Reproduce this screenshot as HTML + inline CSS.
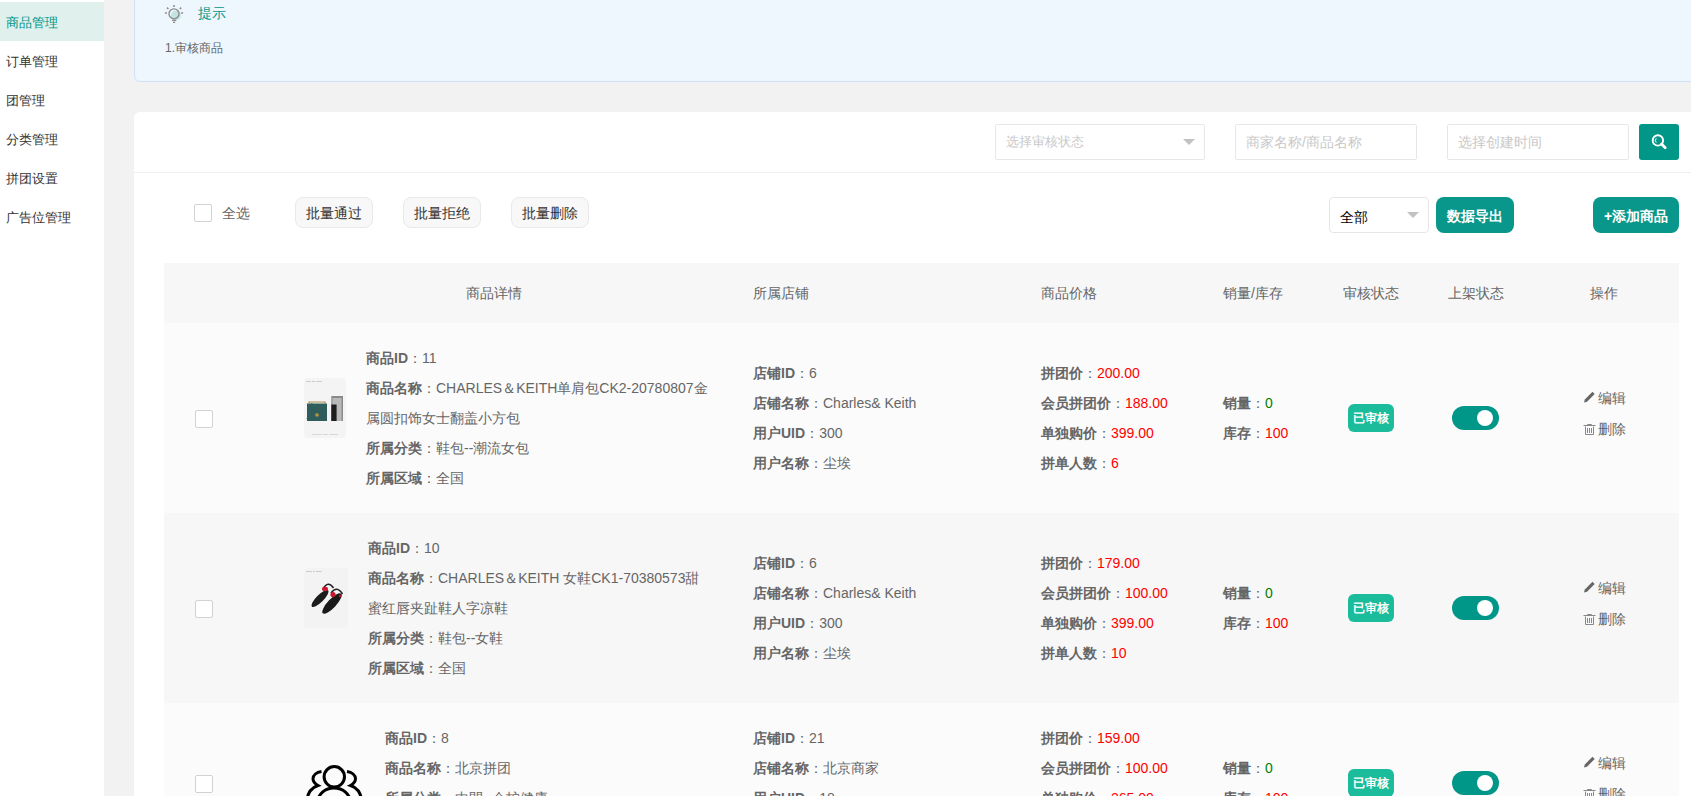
<!DOCTYPE html><html><head><meta charset="utf-8"><style>
*{margin:0;padding:0;box-sizing:border-box}
html,body{width:1691px;height:796px;overflow:hidden;background:#f2f2f2;font-family:"Liberation Sans",sans-serif;color:#666}
.abs{position:absolute}
.side{position:absolute;left:0;top:0;width:104px;height:796px;background:#fff}
.nav{position:absolute;left:0;width:104px;height:39px;line-height:39px;padding-top:1px;padding-left:6px;font-size:13px;color:#333;white-space:nowrap}
.nav.on{background:#dff0ed;color:#009688}
.tip{position:absolute;left:134px;top:-10px;width:1600px;height:92px;background:#eef6fe;border:1px solid #cfe2fa;border-radius:6px}
.card{position:absolute;left:134px;top:112px;width:1600px;height:800px;background:#fff;border-radius:6px}
.inp{position:absolute;top:124px;height:36px;border:1px solid #e6e6e6;border-radius:2px;background:#fff;font-size:13px;color:#c9c9c9;line-height:34px;padding-left:10px;white-space:nowrap}
.tri{position:absolute;width:0;height:0;border-left:6px solid transparent;border-right:6px solid transparent;border-top:6px solid #c2c2c2}
.btn{position:absolute;top:197px;height:31px;border:1px solid #e9e9e9;background:#f8f8f8;border-radius:8px;font-size:14px;color:#333;line-height:30px;text-align:center;white-space:nowrap}
.gbtn{position:absolute;top:197px;height:36px;background:#08978a;border-radius:8px;font-size:14px;color:#fff;line-height:38px;text-align:center;font-weight:bold;white-space:nowrap}
.chk{position:absolute;width:18px;height:18px;border:1px solid #d2d2d2;border-radius:2px;background:#fff}
.th{position:absolute;top:283px;line-height:20px;font-size:14px;color:#666;white-space:nowrap}
.row{position:absolute;left:164px;width:1515px}
.t{position:absolute;font-size:14px;line-height:30px;height:30px;color:#666;white-space:nowrap}
.t b{font-weight:bold;color:#666}
.r{color:#f00}
.g{color:#008000}
.badge{position:absolute;width:46px;height:28px;border-radius:6px;background:#1bbc9b;color:#fff;font-size:12px;font-weight:bold;line-height:28px;text-align:center;white-space:nowrap}
.sw{position:absolute;width:47px;height:24px;border-radius:12px;background:#009688}
.sw i{position:absolute;right:6px;top:4px;width:16px;height:16px;border-radius:50%;background:#fff}
.op{position:absolute;font-size:14px;line-height:20px;color:#666;white-space:nowrap}
</style></head><body>
<div class="side">
<div class="nav on" style="top:2px">商品管理</div>
<div class="nav" style="top:41px">订单管理</div>
<div class="nav" style="top:80px">团管理</div>
<div class="nav" style="top:119px">分类管理</div>
<div class="nav" style="top:158px">拼团设置</div>
<div class="nav" style="top:197px">广告位管理</div>
</div>
<div class="tip"></div>
<svg class="abs" style="left:160px;top:0px" width="30" height="30" viewBox="0 0 30 30">
<circle cx="16" cy="15.3" r="4.9" fill="#c4e3e3"/>
<circle cx="14" cy="13.8" r="5" fill="none" stroke="#8a8a8a" stroke-width="1.35"/>
<path d="M12 20.4h4.2M13 22.3h2.2" stroke="#8a8a8a" stroke-width="1.3"/>
<path d="M14 5.1v1.8M7 7.6l1.4 1.4M21.2 7.6l-1.4 1.4M4.9 13h2M21.1 13h2" stroke="#8a8a8a" stroke-width="1.5"/>
</svg>
<div class="abs" style="left:198px;top:3px;font-size:14px;line-height:20px;color:#009688">提示</div>
<div class="abs" style="left:165px;top:39px;font-size:12px;line-height:18px;color:#666">1.审核商品</div>
<div class="card"></div>
<div class="abs" style="left:134px;top:172px;width:1600px;height:1px;background:#f0f0f0"></div>
<div class="inp" style="left:995px;width:210px">选择审核状态</div>
<div class="tri" style="left:1183px;top:139px"></div>
<div class="inp" style="left:1235px;width:182px;font-size:14px">商家名称/商品名称</div>
<div class="inp" style="left:1447px;width:182px;font-size:14px">选择创建时间</div>
<div class="abs" style="left:1639px;top:124px;width:40px;height:36px;background:#009688;border-radius:3px"></div>
<svg class="abs" style="left:1650px;top:133px" width="18" height="18" viewBox="0 0 18 18">
<circle cx="7.9" cy="7.4" r="5.2" fill="none" stroke="#fff" stroke-width="1.9"/>
<path d="M11.6 11.1l3.6 3.6" stroke="#fff" stroke-width="2.8" stroke-linecap="round"/>
<path d="M6.3 5.3a3 3 0 0 0 0 4.2" fill="none" stroke="#fff" stroke-width="1"/>
</svg>
<div class="chk" style="left:194px;top:204px"></div>
<div class="abs" style="left:222px;top:203px;font-size:14px;line-height:20px;color:#666">全选</div>
<div class="btn" style="left:295px;width:78px">批量通过</div>
<div class="btn" style="left:403px;width:78px">批量拒绝</div>
<div class="btn" style="left:511px;width:78px">批量删除</div>
<div class="inp" style="left:1329px;top:197px;width:100px;height:36px;color:#000;font-size:14px;line-height:34px;padding-top:2px;border-radius:4px">全部</div>
<div class="tri" style="left:1407px;top:212px"></div>
<div class="gbtn" style="left:1436px;width:78px">数据导出</div>
<div class="gbtn" style="left:1593px;width:86px">+添加商品</div>
<div class="abs" style="left:164px;top:263px;width:1515px;height:60px;background:#f7f7f7"></div>
<div class="th" style="left:466px">商品详情</div>
<div class="th" style="left:753px">所属店铺</div>
<div class="th" style="left:1041px">商品价格</div>
<div class="th" style="left:1223px">销量/库存</div>
<div class="th" style="left:1343px">审核状态</div>
<div class="th" style="left:1448px">上架状态</div>
<div class="th" style="left:1590px">操作</div>
<div class="abs" style="left:164px;top:323px;width:1515px;height:190px;background:#fbfbfb"></div>
<div class="chk" style="left:195px;top:410px"></div>
<div class="abs" style="left:304px;top:378px;width:42px;height:60px;background:#f4f4f4;border-radius:4px;overflow:hidden">
<svg class="abs" style="left:0;top:0" width="42" height="60" viewBox="0 0 42 60">
<path d="M2 3.5h5M8 3.5h3M12 3.5h6" stroke="#b0b0b0" stroke-width="0.6"/>
<rect x="3" y="25.5" width="20" height="17.5" fill="#2e5d5c"/>
<path d="M5 25.5v-1.5h16v1.5" fill="none" stroke="#a88a4a" stroke-width="1.2"/>
<path d="M3 41L8 25" stroke="#2e5d5c" stroke-width="1"/>
<circle cx="13" cy="37" r="1.8" fill="#b8963a"/>
<rect x="27.3" y="18" width="11.7" height="25" fill="#8a8a8a"/>
<rect x="28.5" y="20" width="9" height="23" fill="#b9b9b9"/>
<rect x="27.3" y="26.5" width="5.3" height="16.5" fill="#1e1e1e"/>
<path d="M8 56.5h10M19 56.5h5M25 56.5h9" stroke="#c4c4c4" stroke-width="0.6"/>
</svg></div>
<div class="t" style="left:366px;top:343px"><b>商品ID</b>：11</div>
<div class="t" style="left:366px;top:373px"><b>商品名称</b>：CHARLES＆KEITH单肩包CK2-20780807金</div>
<div class="t" style="left:366px;top:403px">属圆扣饰女士翻盖小方包</div>
<div class="t" style="left:366px;top:433px"><b>所属分类</b>：鞋包--潮流女包</div>
<div class="t" style="left:366px;top:463px"><b>所属区域</b>：全国</div>
<div class="t" style="left:753px;top:358px"><b>店铺ID</b>：6</div>
<div class="t" style="left:753px;top:388px"><b>店铺名称</b>：Charles&amp; Keith</div>
<div class="t" style="left:753px;top:418px"><b>用户UID</b>：300</div>
<div class="t" style="left:753px;top:448px"><b>用户名称</b>：尘埃</div>
<div class="t" style="left:1041px;top:358px"><b>拼团价</b>：<span class="r">200.00</span></div>
<div class="t" style="left:1041px;top:388px"><b>会员拼团价</b>：<span class="r">188.00</span></div>
<div class="t" style="left:1041px;top:418px"><b>单独购价</b>：<span class="r">399.00</span></div>
<div class="t" style="left:1041px;top:448px"><b>拼单人数</b>：<span class="r">6</span></div>
<div class="t" style="left:1223px;top:388px"><b>销量</b>：<span class="g">0</span></div>
<div class="t" style="left:1223px;top:418px"><b>库存</b>：<span class="r">100</span></div>
<div class="badge" style="left:1348px;top:404px">已审核</div>
<div class="sw" style="left:1452px;top:406px"><i></i></div>
<svg class="abs" style="left:1583px;top:391px" width="13" height="12" viewBox="0 0 13 12"><path d="M1 11.5l0.8-3L9.5 0.8l2.2 2.2L4 10.7z" fill="#666"/></svg>
<div class="op" style="left:1598px;top:388px">编辑</div>
<svg class="abs" style="left:1583px;top:424px" width="13" height="11" viewBox="0 0 13 11"><path d="M0.5 1.5h12M4.5 1.5V0.5h4v1M2.5 2.5v8h8v-8M4.5 4v5M6.5 4v5M8.5 4v5" fill="none" stroke="#888" stroke-width="1"/></svg>
<div class="op" style="left:1598px;top:419px">删除</div>
<div class="abs" style="left:164px;top:513px;width:1515px;height:190px;background:#f7f7f7"></div>
<div class="chk" style="left:195px;top:600px"></div>
<div class="abs" style="left:304px;top:568px;width:44px;height:60px;background:#f3f3f3;border-radius:4px;overflow:hidden">
<svg class="abs" style="left:0;top:0" width="44" height="60" viewBox="0 0 44 60">
<path d="M2 3.5h6M9 3.5h2M12 3.5h6" stroke="#b0b0b0" stroke-width="0.6"/>
<path d="M19 21Q24 12 29.5 20" fill="none" stroke="#222" stroke-width="1.6"/>
<ellipse cx="16" cy="30.5" rx="11.5" ry="3.7" transform="rotate(-45 16 30.5)" fill="#1c1c1c"/>
<path d="M27 25Q33 17 38.5 26" fill="none" stroke="#222" stroke-width="1.6"/>
<ellipse cx="28" cy="35.5" rx="13.5" ry="4.3" transform="rotate(-47 28 35.5)" fill="#1a1a1a"/>
<ellipse cx="21" cy="21" rx="3" ry="2.2" fill="#c8192e"/>
<ellipse cx="29" cy="26.5" rx="2.6" ry="2.6" fill="#c8192e"/>
<ellipse cx="36" cy="28" rx="1.3" ry="1.3" fill="#b0182a"/>
</svg></div>
<div class="t" style="left:368px;top:533px"><b>商品ID</b>：10</div>
<div class="t" style="left:368px;top:563px"><b>商品名称</b>：CHARLES＆KEITH 女鞋CK1-70380573甜</div>
<div class="t" style="left:368px;top:593px">蜜红唇夹趾鞋人字凉鞋</div>
<div class="t" style="left:368px;top:623px"><b>所属分类</b>：鞋包--女鞋</div>
<div class="t" style="left:368px;top:653px"><b>所属区域</b>：全国</div>
<div class="t" style="left:753px;top:548px"><b>店铺ID</b>：6</div>
<div class="t" style="left:753px;top:578px"><b>店铺名称</b>：Charles&amp; Keith</div>
<div class="t" style="left:753px;top:608px"><b>用户UID</b>：300</div>
<div class="t" style="left:753px;top:638px"><b>用户名称</b>：尘埃</div>
<div class="t" style="left:1041px;top:548px"><b>拼团价</b>：<span class="r">179.00</span></div>
<div class="t" style="left:1041px;top:578px"><b>会员拼团价</b>：<span class="r">100.00</span></div>
<div class="t" style="left:1041px;top:608px"><b>单独购价</b>：<span class="r">399.00</span></div>
<div class="t" style="left:1041px;top:638px"><b>拼单人数</b>：<span class="r">10</span></div>
<div class="t" style="left:1223px;top:578px"><b>销量</b>：<span class="g">0</span></div>
<div class="t" style="left:1223px;top:608px"><b>库存</b>：<span class="r">100</span></div>
<div class="badge" style="left:1348px;top:594px">已审核</div>
<div class="sw" style="left:1452px;top:596px"><i></i></div>
<svg class="abs" style="left:1583px;top:581px" width="13" height="12" viewBox="0 0 13 12"><path d="M1 11.5l0.8-3L9.5 0.8l2.2 2.2L4 10.7z" fill="#666"/></svg>
<div class="op" style="left:1598px;top:578px">编辑</div>
<svg class="abs" style="left:1583px;top:614px" width="13" height="11" viewBox="0 0 13 11"><path d="M0.5 1.5h12M4.5 1.5V0.5h4v1M2.5 2.5v8h8v-8M4.5 4v5M6.5 4v5M8.5 4v5" fill="none" stroke="#888" stroke-width="1"/></svg>
<div class="op" style="left:1598px;top:609px">删除</div>
<div class="abs" style="left:164px;top:703px;width:1515px;height:160px;background:#fbfbfb"></div>
<div class="chk" style="left:195px;top:775px"></div>
<svg class="abs" style="left:304px;top:743px" width="60" height="60" viewBox="0 0 60 60">
<g fill="none" stroke="#000" stroke-width="3">
<circle cx="30.3" cy="33.8" r="10.2"/>
<path d="M13 60c1-9 8-15 17-15s16 6 17 15"/>
<path d="M17.5 28.5c-5 0.8-8.5 3.8-8.5 7.3c0 3 2 5 5 6.7c-6 2-10 7-11 14"/>
<path d="M43 28.5c5 0.8 8.5 3.8 8.5 7.3c0 3-2 5-5 6.7c6 2 10 7 11 14"/>
</g></svg>
<div class="t" style="left:385px;top:723px"><b>商品ID</b>：8</div>
<div class="t" style="left:385px;top:753px"><b>商品名称</b>：北京拼团</div>
<div class="t" style="left:385px;top:783px"><b>所属分类</b>：中間--企护健康</div>
<div class="t" style="left:385px;top:813px"><b>所属区域</b>：全国</div>
<div class="t" style="left:753px;top:723px"><b>店铺ID</b>：21</div>
<div class="t" style="left:753px;top:753px"><b>店铺名称</b>：北京商家</div>
<div class="t" style="left:753px;top:783px"><b>用户UID</b>：18</div>
<div class="t" style="left:753px;top:813px"><b>用户名称</b>：北京</div>
<div class="t" style="left:1041px;top:723px"><b>拼团价</b>：<span class="r">159.00</span></div>
<div class="t" style="left:1041px;top:753px"><b>会员拼团价</b>：<span class="r">100.00</span></div>
<div class="t" style="left:1041px;top:783px"><b>单独购价</b>：<span class="r">265.00</span></div>
<div class="t" style="left:1041px;top:813px"><b>拼单人数</b>：<span class="r">2</span></div>
<div class="t" style="left:1223px;top:753px"><b>销量</b>：<span class="g">0</span></div>
<div class="t" style="left:1223px;top:783px"><b>库存</b>：<span class="r">100</span></div>
<div class="badge" style="left:1348px;top:769px">已审核</div>
<div class="sw" style="left:1452px;top:771px"><i></i></div>
<svg class="abs" style="left:1583px;top:756px" width="13" height="12" viewBox="0 0 13 12"><path d="M1 11.5l0.8-3L9.5 0.8l2.2 2.2L4 10.7z" fill="#666"/></svg>
<div class="op" style="left:1598px;top:753px">编辑</div>
<svg class="abs" style="left:1583px;top:789px" width="13" height="11" viewBox="0 0 13 11"><path d="M0.5 1.5h12M4.5 1.5V0.5h4v1M2.5 2.5v8h8v-8M4.5 4v5M6.5 4v5M8.5 4v5" fill="none" stroke="#888" stroke-width="1"/></svg>
<div class="op" style="left:1598px;top:784px">删除</div>
</body></html>
